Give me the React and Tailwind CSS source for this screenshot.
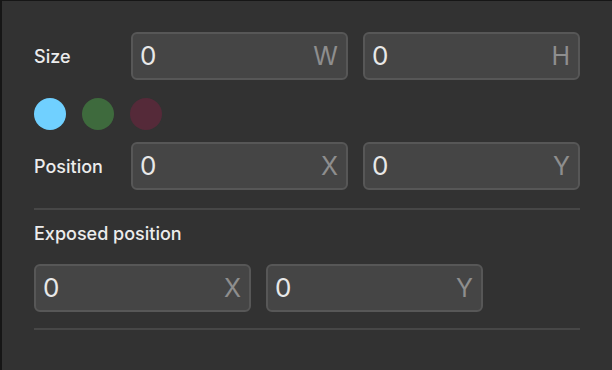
const Field = ({ value, suffix }) => (
  <div className="flex items-center justify-between w-[217px] h-[48px] pl-[7px] pr-[8px] bg-[#454545] border-2 border-[#575757] rounded-[6px]">
    <span className="text-[#e8e8e8] text-[26px] leading-none">{value}</span>
    <span className="text-[#8e8e8e] text-[25px] leading-none">{suffix}</span>
  </div>
);

export default function App() {
  return (
    <div
      className="w-[612px] h-[370px] bg-[#323232] border-l-2 border-t border-[#161616] pl-[32px] pr-[32px] pt-[31px]"
      style={{ fontFamily: "Inter, 'Noto Sans', sans-serif" }}
    >
      {/* Size */}
      <div className="flex items-center">
        <div className="w-[97px] text-[#ececec] text-[18px] font-medium">Size</div>
        <div className="flex gap-[15px]">
          <Field value="0" suffix="W" />
          <Field value="0" suffix="H" />
        </div>
      </div>

      {/* Colors */}
      <div className="flex gap-4 mt-[18px]">
        <div className="w-8 h-8 rounded-full bg-[#70d0ff]" />
        <div className="w-8 h-8 rounded-full bg-[#3e6a3d]" />
        <div className="w-8 h-8 rounded-full bg-[#552a39]" />
      </div>

      {/* Position */}
      <div className="flex items-center mt-[12px]">
        <div className="w-[97px] text-[#ececec] text-[18px] font-medium">Position</div>
        <div className="flex gap-[15px]">
          <Field value="0" suffix="X" />
          <Field value="0" suffix="Y" />
        </div>
      </div>

      <div className="h-[2px] bg-[#474747] mt-[18px]" />

      <div className="mt-[12px] h-[24px] leading-[24px] text-[#ececec] text-[18px] font-medium">
        Exposed position
      </div>

      <div className="flex gap-[15px] mt-[18px]">
        <Field value="0" suffix="X" />
        <Field value="0" suffix="Y" />
      </div>

      <div className="h-[2px] bg-[#474747] mt-[16px]" />
    </div>
  );
}
